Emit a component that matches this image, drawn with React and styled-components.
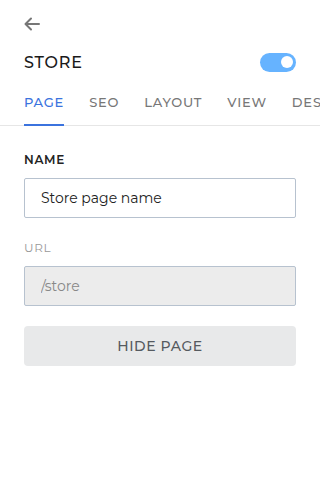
import React from 'react';
import styled, { createGlobalStyle } from 'styled-components';

const GlobalStyle = createGlobalStyle`
    html, body {
        margin: 0;
        padding: 0;
        background: #ffffff;
        font-family: "Montserrat", "Lato", "Liberation Sans", sans-serif;
    }
`;

const Panel = styled.div`
    width: 320px;
    height: 480px;
    overflow: hidden;
    background: #fff;
`;

const Header = styled.div`
    padding: 16px 24px 0;
`;

const BackButton = styled.button`
    display: flex;
    align-items: center;
    justify-content: center;
    width: 16px;
    height: 16px;
    padding: 0;
    margin: 0;
    border: none;
    background: none;
    color: #777;
    cursor: pointer;
`;

const TitleRow = styled.div`
    display: flex;
    align-items: center;
    justify-content: space-between;
    margin-top: 18px;
    height: 24px;
`;

const Title = styled.h1`
    margin: 0;
    font-size: 16px;
    font-weight: 500;
    letter-spacing: 0.8px;
    color: #1a1a1a;
`;

const Toggle = styled.div`
    position: relative;
    width: 36px;
    height: 19px;
    border-radius: 10px;
    background: ${p => (p.on ? '#66b3ff' : '#ccc')};
`;

const Knob = styled.span`
    position: absolute;
    top: 3.5px;
    right: 3.5px;
    width: 12px;
    height: 12px;
    border-radius: 50%;
    background: #fff;
`;

const Tabs = styled.div`
    display: flex;
    gap: 25px;
    padding: 0 24px;
    margin-top: 12px;
    border-bottom: 1px solid #e6e6e6;
    white-space: nowrap;
`;

const Tab = styled.div`
    flex-shrink: 0;
    padding: 8px 0 14px;
    font-size: 13px;
    font-weight: 500;
    letter-spacing: 0.8px;
    color: ${p => (p.active ? '#3b73de' : '#777')};
    border-bottom: 2px solid ${p => (p.active ? '#3b73de' : 'transparent')};
    margin-bottom: -1px;
`;

const Body = styled.div`
    display: flex;
    flex-direction: column;
    padding: 26px 24px 0;
`;

const Label = styled.label`
    display: block;
    font-size: 12px;
    letter-spacing: 0.7px;
    color: ${p => (p.muted ? '#999' : '#222')};
    margin-bottom: 11px;
    font-weight: ${p => (p.muted ? 400 : 600)};
`;

const Input = styled.input`
    box-sizing: border-box;
    width: 100%;
    height: 40px;
    padding: 0 16px;
    border: 1px solid #b7c2cf;
    border-radius: 2px;
    background: ${p => (p.disabled ? '#ececec' : '#fff')};
    font-family: inherit;
    font-size: 14px;
    color: ${p => (p.disabled ? '#888' : '#222')};
    margin-bottom: 22px;
    outline: none;
    -webkit-text-fill-color: ${p => (p.disabled ? '#888' : '#222')};
    opacity: 1;
`;

const Button = styled.button`
    height: 40px;
    width: 100%;
    border: none;
    border-radius: 4px;
    background: #e8e9ea;
    font-family: inherit;
    font-size: 14px;
    font-weight: 500;
    letter-spacing: 0.6px;
    color: #555a60;
    cursor: pointer;
    margin-top: -2px;
`;

const tabs = ['PAGE', 'SEO', 'LAYOUT', 'VIEW', 'DESIGN'];

export default function App() {
    return (
        <Panel>
            <GlobalStyle />
            <Header>
                <BackButton aria-label="Back">
                    <svg width="16" height="14" viewBox="0 0 16 14" fill="none" stroke="currentColor" strokeWidth="2" strokeLinecap="round" strokeLinejoin="round">
                        <path d="M15 7H2M7 1.5L1.5 7L7 12.5" />
                    </svg>
                </BackButton>
                <TitleRow>
                    <Title>STORE</Title>
                    <Toggle on>
                        <Knob />
                    </Toggle>
                </TitleRow>
            </Header>
            <Tabs>
                {tabs.map((t, i) => (
                    <Tab key={t} active={i === 0}>{t}</Tab>
                ))}
            </Tabs>
            <Body>
                <Label>NAME</Label>
                <Input defaultValue="Store page name" />
                <Label muted>URL</Label>
                <Input disabled defaultValue="/store" />
                <Button>HIDE PAGE</Button>
            </Body>
        </Panel>
    );
}
